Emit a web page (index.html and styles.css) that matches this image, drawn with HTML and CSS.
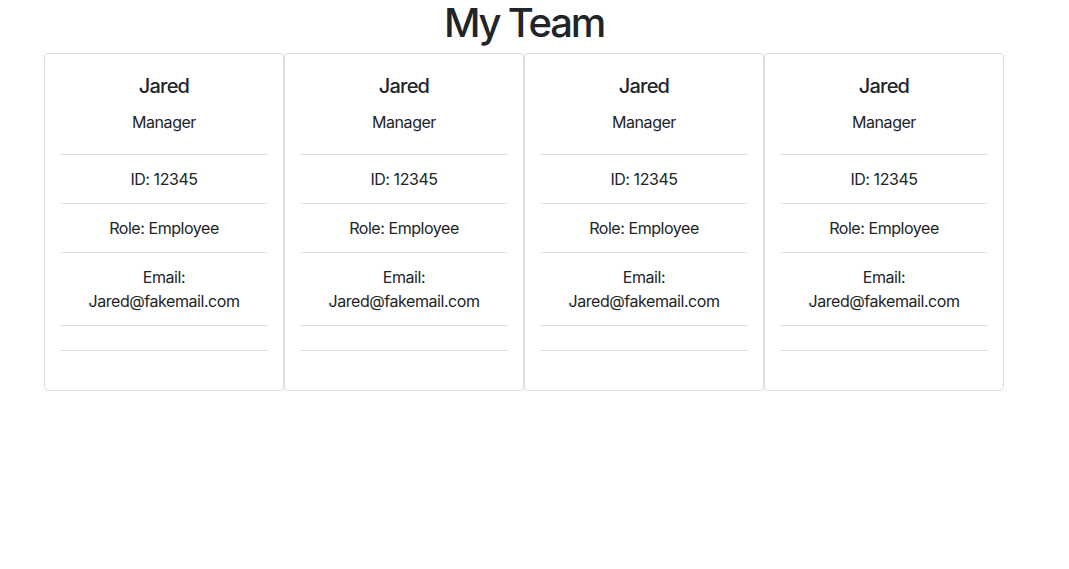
FILE: index.html
```html
<!DOCTYPE html>
<html lang="en">
<head>
<meta charset="utf-8">
<title>My Team</title>
<link rel="stylesheet" href="styles.css">
</head>
<body>
<main class="page">
  <h1 class="page-title">My Team</h1>
  <div class="team">
    <div class="card">
      <div class="card-body">
        <h5 class="card-title">Jared</h5>
        <p class="card-role">Manager</p>
      </div>
      <ul class="list">
        <li class="item">ID: 12345</li>
        <li class="item">Role: Employee</li>
        <li class="item">Email:<br>Jared@fakemail.com</li>
        <li class="item empty"></li>
      </ul>
    </div>
    <div class="card">
      <div class="card-body">
        <h5 class="card-title">Jared</h5>
        <p class="card-role">Manager</p>
      </div>
      <ul class="list">
        <li class="item">ID: 12345</li>
        <li class="item">Role: Employee</li>
        <li class="item">Email:<br>Jared@fakemail.com</li>
        <li class="item empty"></li>
      </ul>
    </div>
    <div class="card">
      <div class="card-body">
        <h5 class="card-title">Jared</h5>
        <p class="card-role">Manager</p>
      </div>
      <ul class="list">
        <li class="item">ID: 12345</li>
        <li class="item">Role: Employee</li>
        <li class="item">Email:<br>Jared@fakemail.com</li>
        <li class="item empty"></li>
      </ul>
    </div>
    <div class="card">
      <div class="card-body">
        <h5 class="card-title">Jared</h5>
        <p class="card-role">Manager</p>
      </div>
      <ul class="list">
        <li class="item">ID: 12345</li>
        <li class="item">Role: Employee</li>
        <li class="item">Email:<br>Jared@fakemail.com</li>
        <li class="item empty"></li>
      </ul>
    </div>
  </div>
</main>
</body>
</html>
```

FILE: styles.css
```css
* { box-sizing: border-box; }
html, body { margin: 0; padding: 0; background: #fff; }
body {
  font-family: Inter, "Noto Sans", "Liberation Sans", sans-serif;
  color: #212529;
  font-size: 16px;
  line-height: 1.5;
  letter-spacing: -0.028em;
}
.page {
  width: 960px;
  margin-left: 44px;
}
.page-title {
  margin: -1px 0 6px;
  font-size: 40px;
  font-weight: 500;
  line-height: 48px;
  text-align: center;
  letter-spacing: -0.055em;
}
.team {
  display: flex;
}
.card {
  width: 240px;
  border: 1px solid #dfdfdf;
  border-radius: 4px;
  text-align: center;
  padding-bottom: 39px;
}
.card-body {
  padding: 20px 20px 20px;
}
.card-title {
  margin: 0 0 12px;
  font-size: 20px;
  font-weight: 500;
  line-height: 24px;
  letter-spacing: -0.04em;
}
.card-role {
  margin: 0;
  line-height: 24px;
}
.list {
  list-style: none;
  margin: 0 15px;
  padding: 0;
}
.item {
  border-top: 1px solid #dfdfdf;
  padding: 12px 0;
  line-height: 24px;
}
.item.empty {
  border-bottom: 1px solid #dfdfdf;
  padding: 0;
  height: 26px;
}
```
